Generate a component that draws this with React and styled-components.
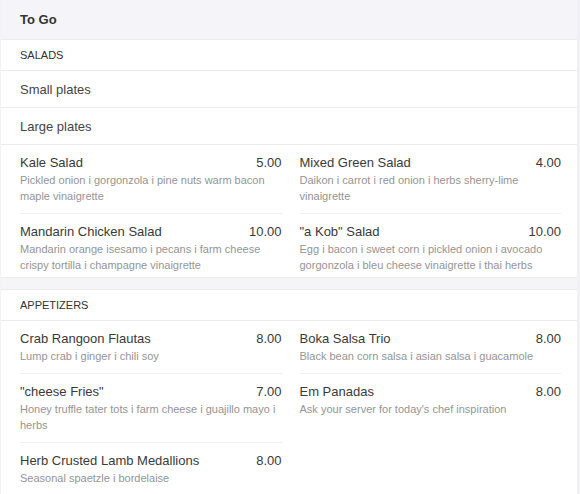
import styled, { createGlobalStyle } from 'styled-components';

const GlobalStyle = createGlobalStyle`
  body {
    margin: 0;
    background-color: #f1f0f6;
    font-family: "Liberation Sans", Arial, sans-serif;
  }
`;

const salads = [
  [
    { name: 'Kale Salad', price: '5.00', desc: 'Pickled onion i gorgonzola i pine nuts warm bacon maple vinaigrette' },
    { name: 'Mandarin Chicken Salad', price: '10.00', desc: 'Mandarin orange isesamo i pecans i farm cheese crispy tortilla i champagne vinaigrette' },
  ],
  [
    { name: 'Mixed Green Salad', price: '4.00', desc: 'Daikon i carrot i red onion i herbs sherry-lime vinaigrette' },
    { name: '"a Kob" Salad', price: '10.00', desc: 'Egg i bacon i sweet corn i pickled onion i avocado gorgonzola i bleu cheese vinaigrette i thai herbs' },
  ],
];

const appetizers = [
  [
    { name: 'Crab Rangoon Flautas', price: '8.00', desc: 'Lump crab i ginger i chili soy' },
    { name: '"cheese Fries"', price: '7.00', desc: 'Honey truffle tater tots i farm cheese i guajillo mayo i herbs' },
    { name: 'Herb Crusted Lamb Medallions', price: '8.00', desc: 'Seasonal spaetzle i bordelaise' },
  ],
  [
    { name: 'Boka Salsa Trio', price: '8.00', desc: 'Black bean corn salsa i asian salsa i guacamole' },
    { name: 'Em Panadas', price: '8.00', desc: "Ask your server for today's chef inspiration" },
  ],
];

function ItemGrid({ columns, tight }) {
  return (
    <Grid>
      {columns.map((col, i) => (
        <Column key={i}>
          {col.map((item, j) => (
            <Item key={item.name} $tight={tight && j === col.length - 1}>
              <ItemHead>
                <ItemName>{item.name}</ItemName>
                <Price>{item.price}</Price>
              </ItemHead>
              <Desc>{item.desc}</Desc>
            </Item>
          ))}
        </Column>
      ))}
    </Grid>
  );
}

export default function App() {
  return (
    <>
      <GlobalStyle />
      <Page>
        <Header>To Go</Header>

        <SectionTitle>Salads</SectionTitle>
        <Category>Small plates</Category>
        <Category>Large plates</Category>
        <ItemGrid columns={salads} tight />

        <Break />

        <SectionTitle>Appetizers</SectionTitle>
        <ItemGrid columns={appetizers} />
      </Page>
    </>
  );
}

const Page = styled.div`
  width: 577px;
  min-height: 494px;
  background-color: white;
  border-left: 1px solid #f4f4f6;
  box-sizing: border-box;
`;

const Header = styled.div`
  height: 39px;
  padding: 0 19px;
  display: flex;
  align-items: center;
  background-color: #f5f5f9;
  border-bottom: 1px solid #e9e9ee;
  color: #333;
  font-size: 13px;
  font-weight: bold;
`;

const SectionTitle = styled.div`
  height: 30px;
  padding: 0 19px;
  display: flex;
  align-items: center;
  border-bottom: 1px solid #ececec;
  color: #333;
  font-size: 11px;
  text-transform: uppercase;
`;

const Category = styled.div`
  height: 36px;
  padding: 0 19px;
  display: flex;
  align-items: center;
  border-bottom: 1px solid #ececec;
  color: #444;
  font-size: 13px;
`;

const Grid = styled.div`
  display: grid;
  grid-template-columns: 1fr 1fr;
  column-gap: 18px;
  padding: 0 16px 0 19px;
  border-bottom: 1px solid #ececec;
`;

const Column = styled.div`
  display: flex;
  flex-direction: column;
`;

const Item = styled.div`
  padding: 9px 0 ${(p) => (p.$tight ? '4px' : '9px')};

  & + & {
    border-top: 1px solid #efefef;
  }
`;

const ItemHead = styled.div`
  display: flex;
  justify-content: space-between;
  line-height: 18px;
  font-size: 13px;
  color: #3a3a3a;
`;

const ItemName = styled.span``;

const Price = styled.span``;

const Desc = styled.div`
  font-size: 11px;
  line-height: 16px;
  color: #959595;
`;

const Break = styled.div`
  height: 11px;
  background-color: #f5f5f7;
  border-bottom: 1px solid #ececec;
`;
